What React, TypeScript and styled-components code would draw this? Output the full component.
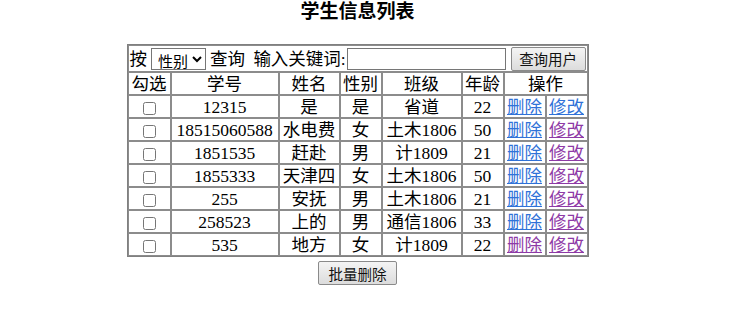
import React from 'react';
import styled, { createGlobalStyle } from 'styled-components';

type Student = {
  id: string;
  name: string;
  sex: string;
  klass: string;
  age: number;
  delVisited?: boolean;
  editVisited?: boolean;
};

const students: Student[] = [
  { id: '12315', name: '是', sex: '是', klass: '省道', age: 22 },
  { id: '18515060588', name: '水电费', sex: '女', klass: '土木1806', age: 50, editVisited: true },
  { id: '1851535', name: '赶赴', sex: '男', klass: '计1809', age: 21, editVisited: true },
  { id: '1855333', name: '天津四', sex: '女', klass: '土木1806', age: 50, editVisited: true },
  { id: '255', name: '安抚', sex: '男', klass: '土木1806', age: 21, editVisited: true },
  { id: '258523', name: '上的', sex: '男', klass: '通信1806', age: 33, editVisited: true },
  { id: '535', name: '地方', sex: '女', klass: '计1809', age: 22, delVisited: true, editVisited: true },
];

const GlobalStyle = createGlobalStyle`
  html, body {
    margin: 0;
    background: #fff;
  }
  body {
    font-family: "Liberation Serif", "Noto Sans CJK SC", serif;
    font-size: 17px;
    color: #000;
  }
`;

const Page = styled.div`
  width: 715px;
  text-align: center;
`;

const Title = styled.h3`
  margin: 0 0 20px;
  font-size: 19px;
  line-height: 24px;
  font-weight: bold;
`;

const Grid = styled.table`
  margin: 0 auto;
  width: 460px;
  border-collapse: separate;
  border-spacing: 0;
  border: 1px solid #808080;
  table-layout: fixed;
`;

const Cell = styled.td`
  border: 1px solid #8c8c8c;
  padding: 0;
  height: 21px;
  line-height: 20px;
  font-size: 17.5px;
  text-align: center;
  white-space: nowrap;
  font-weight: normal;
  overflow: hidden;
`;

const SearchCell = styled(Cell)`
  height: 25px;
  text-align: left;
  padding: 0 1px;
`;

const SearchBar = styled.div`
  display: flex;
  align-items: center;
  gap: 4px;
`;

const Select = styled.select`
  font-family: "Noto Sans CJK SC", sans-serif;
  font-size: 15px;
  width: 56px;
  height: 22px;
  padding: 0 0 0 2px;
  border: 1px solid #767676;
  border-radius: 0;
  background: #fff;
  color: #000;
`;

const KeywordInput = styled.input`
  width: 159px;
  height: 22px;
  box-sizing: border-box;
  padding: 1px 2px;
  border: 1px solid #767676;
  margin-left: -3px;
`;

const GreyButton = styled.button`
  font-family: "Noto Sans CJK SC", sans-serif;
  font-size: 14.5px;
  height: 24px;
  padding: 0;
  border: 1px solid #8a8a8a;
  border-radius: 2px;
  background: linear-gradient(#f4f4f4, #dcdcdc);
  color: #111;
`;

const SearchButton = styled(GreyButton)`
  margin-left: 1px;
  width: 77px;
`;

const BatchButton = styled(GreyButton)`
  margin-top: 4px;
  width: 79px;
`;

const Link = styled.a<{ $visited?: boolean }>`
  color: ${({ $visited }) => ($visited ? '#8e3aa6' : '#2f72d8')};
  text-decoration: underline;
  cursor: pointer;
`;

const Box = styled.input`
  width: 13px;
  height: 13px;
  margin: 0;
  vertical-align: middle;
`;

export default function App() {
  return (
    <>
      <GlobalStyle />
      <Page>
        <Title>学生信息列表</Title>
        <Grid>
          <colgroup>
            <col style={{ width: 43 }} />
            <col style={{ width: 108 }} />
            <col style={{ width: 61 }} />
            <col style={{ width: 42 }} />
            <col style={{ width: 80 }} />
            <col style={{ width: 42 }} />
            <col style={{ width: 42 }} />
            <col style={{ width: 42 }} />
          </colgroup>
          <tbody>
            <tr>
              <SearchCell colSpan={8}>
                <SearchBar>
                  <span>按</span>
                  <Select defaultValue="sex">
                    <option value="sex">性别</option>
                    <option value="name">姓名</option>
                  </Select>
                  <span>查询</span>
                  <span>&nbsp;输入关键词:</span>
                  <KeywordInput type="text" />
                  <SearchButton>查询用户</SearchButton>
                </SearchBar>
              </SearchCell>
            </tr>
            <tr>
              <Cell as="th">勾选</Cell>
              <Cell as="th">学号</Cell>
              <Cell as="th">姓名</Cell>
              <Cell as="th">性别</Cell>
              <Cell as="th">班级</Cell>
              <Cell as="th">年龄</Cell>
              <Cell as="th" colSpan={2}>操作</Cell>
            </tr>
            {students.map((s) => (
              <tr key={s.id}>
                <Cell>
                  <Box type="checkbox" />
                </Cell>
                <Cell>{s.id}</Cell>
                <Cell>{s.name}</Cell>
                <Cell>{s.sex}</Cell>
                <Cell>{s.klass}</Cell>
                <Cell>{s.age}</Cell>
                <Cell>
                  <Link $visited={s.delVisited}>删除</Link>
                </Cell>
                <Cell>
                  <Link $visited={s.editVisited}>修改</Link>
                </Cell>
              </tr>
            ))}
          </tbody>
        </Grid>
        <BatchButton>批量删除</BatchButton>
      </Page>
    </>
  );
}
